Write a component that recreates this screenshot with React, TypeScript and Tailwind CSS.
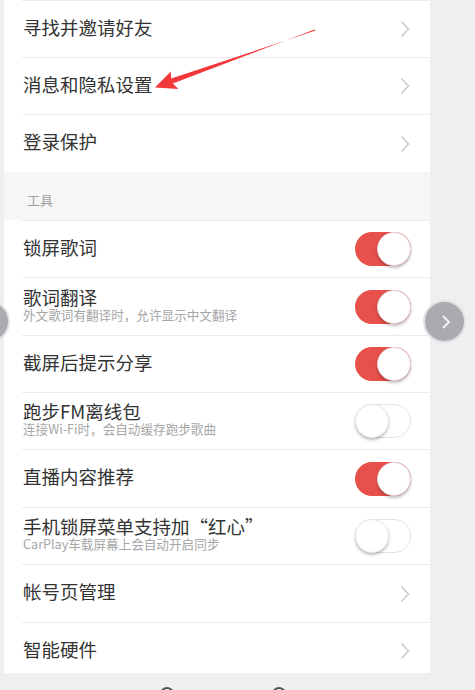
import React from 'react';

type Row = {
  title: string;
  sub?: string;
  kind: 'link' | 'on' | 'off';
  h: string;
};

const TOP_ROWS: Row[] = [
  { title: '寻找并邀请好友', kind: 'link', h: 'h-[57px]' },
  { title: '消息和隐私设置', kind: 'link', h: 'h-[57px]' },
  { title: '登录保护', kind: 'link', h: 'h-[58px]' },
];

const TOOL_ROWS: Row[] = [
  { title: '锁屏歌词', kind: 'on', h: 'h-[57px]' },
  { title: '歌词翻译', sub: '外文歌词有翻译时，允许显示中文翻译', kind: 'on', h: 'h-[58px]' },
  { title: '截屏后提示分享', kind: 'on', h: 'h-[57px]' },
  { title: '跑步FM离线包', sub: '连接Wi-Fi时，会自动缓存跑步歌曲', kind: 'off', h: 'h-[57px]' },
  { title: '直播内容推荐', kind: 'on', h: 'h-[58px]' },
  { title: '手机锁屏菜单支持加“红心”', sub: 'CarPlay车载屏幕上会自动开启同步', kind: 'off', h: 'h-[57px]' },
  { title: '帐号页管理', kind: 'link', h: 'h-[58px]' },
  { title: '智能硬件', kind: 'link', h: 'h-[57px]' },
];

function Chevron() {
  return (
    <svg width="10" height="18" viewBox="0 0 10 18" className="mr-[1px]">
      <path d="M1.5 1.5 L8.5 9 L1.5 16.5" fill="none" stroke="#c8c8cc" strokeWidth="1.4" />
    </svg>
  );
}

function Toggle({ on }: { on: boolean }) {
  return on ? (
    <div className="relative w-[56px] h-[34px] rounded-full bg-[#e8504b]">
      <div className="absolute right-0 top-0 w-[34px] h-[34px] rounded-full bg-white border border-[#e6d6d6] shadow-[0_2px_3px_rgba(0,0,0,0.25)]" />
    </div>
  ) : (
    <div className="relative w-[56px] h-[34px] rounded-full bg-white border border-[#e4e4e4]">
      <div className="absolute left-[-1px] top-[-1px] w-[34px] h-[34px] rounded-full bg-white border border-[#e8e8e8] shadow-[0_2px_3px_rgba(0,0,0,0.25)]" />
    </div>
  );
}

function SettingRow({ row }: { row: Row }) {
  return (
    <div className="pl-[18px]">
      <div className={`${row.h} border-t border-[#ececec] flex items-center justify-between pl-[1px] pr-[19px]`}>
        <div className="flex flex-col mb-[4px]">
          <span className="text-[18.5px] leading-[19px] text-[#333333]">{row.title}</span>
          {row.sub && <span className="text-[12.6px] leading-[14px] mt-[1px] text-[#a6a6a6]">{row.sub}</span>}
        </div>
        {row.kind === 'link' ? <Chevron /> : <Toggle on={row.kind === 'on'} />}
      </div>
    </div>
  );
}

export default function App() {
  return (
    <div
      className="relative w-[475px] h-[690px] overflow-hidden bg-[#efefef]"
      style={{ fontFamily: '"Noto Sans CJK SC", "Noto Sans", sans-serif' }}
    >
      <div className="ml-[4px] w-[426px] bg-white">
        {TOP_ROWS.map((r) => (
          <SettingRow key={r.title} row={r} />
        ))}
        <div className="h-[48px] bg-[#f6f6f6] pl-[23px] pt-[14px]">
          <span className="text-[13px] leading-[20px] text-[#a0a0a0]">工具</span>
        </div>
        {TOOL_ROWS.map((r) => (
          <SettingRow key={r.title} row={r} />
        ))}
      </div>

      {/* bottom strip over the list */}
      <div className="absolute left-0 right-0 top-[673px] h-[17px] bg-[#efefef]">
        <div className="absolute left-[160px] top-[14px] w-[14px] h-[14px] rounded-full border-2 border-[#555555]" />
        <div className="absolute left-[272px] top-[14px] w-[14px] h-[14px] rounded-full border-2 border-[#555555]" />
      </div>

      {/* pager buttons */}
      <div className="absolute left-[-33px] top-[300px] w-[43px] h-[43px] rounded-full bg-[#aaabb0] border-2 border-[#e2e2e4]" />
      <div className="absolute left-[423px] top-[300px] w-[43px] h-[43px] rounded-full bg-[#aaabb0] border-2 border-[#e2e2e4] flex items-center justify-center">
        <svg width="10" height="16" viewBox="0 0 10 16" className="ml-[2px]">
          <path d="M2 2 L8 8 L2 14" fill="none" stroke="#f4f4f4" strokeWidth="1.8" />
        </svg>
      </div>

      {/* annotation arrow */}
      <svg className="absolute left-0 top-0 pointer-events-none" width="475" height="690">
        <polygon
          points="315.5,30.6 171.2,78.6 170.8,71.5 155,87.5 178.5,89 172.8,83.4 314.5,29.4"
          fill="#f2383a"
        />
      </svg>
    </div>
  );
}
